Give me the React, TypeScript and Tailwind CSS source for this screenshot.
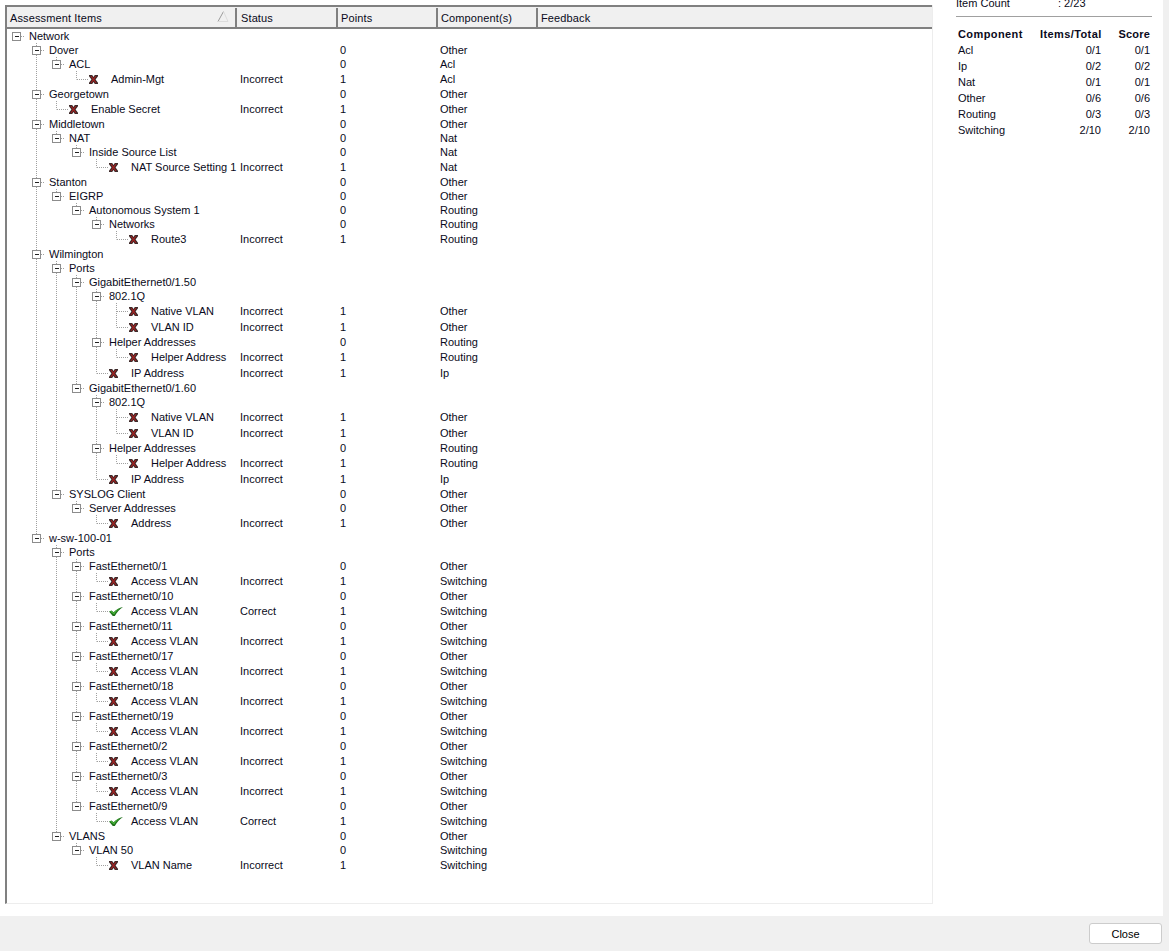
import React from "react";

type Row = [number, string, string?, string?, string?, ("x" | "c")?];

const portBlock = (name: string, good = false): Row[] => [
  [3, name, "", "0", "Other"],
  [4, "Access VLAN", good ? "Correct" : "Incorrect", "1", "Switching", good ? "c" : "x"],
];

const giBlock = (name: string): Row[] => [
  [3, name],
  [4, "802.1Q"],
  [5, "Native VLAN", "Incorrect", "1", "Other", "x"],
  [5, "VLAN ID", "Incorrect", "1", "Other", "x"],
  [4, "Helper Addresses", "", "0", "Routing"],
  [5, "Helper Address", "Incorrect", "1", "Routing", "x"],
  [4, "IP Address", "Incorrect", "1", "Ip", "x"],
];

const rows: Row[] = [
  [0, "Network"],
  [1, "Dover", "", "0", "Other"],
  [2, "ACL", "", "0", "Acl"],
  [3, "Admin-Mgt", "Incorrect", "1", "Acl", "x"],
  [1, "Georgetown", "", "0", "Other"],
  [2, "Enable Secret", "Incorrect", "1", "Other", "x"],
  [1, "Middletown", "", "0", "Other"],
  [2, "NAT", "", "0", "Nat"],
  [3, "Inside Source List", "", "0", "Nat"],
  [4, "NAT Source Setting 1", "Incorrect", "1", "Nat", "x"],
  [1, "Stanton", "", "0", "Other"],
  [2, "EIGRP", "", "0", "Other"],
  [3, "Autonomous System 1", "", "0", "Routing"],
  [4, "Networks", "", "0", "Routing"],
  [5, "Route3", "Incorrect", "1", "Routing", "x"],
  [1, "Wilmington"],
  [2, "Ports"],
  ...giBlock("GigabitEthernet0/1.50"),
  ...giBlock("GigabitEthernet0/1.60"),
  [2, "SYSLOG Client", "", "0", "Other"],
  [3, "Server Addresses", "", "0", "Other"],
  [4, "Address", "Incorrect", "1", "Other", "x"],
  [1, "w-sw-100-01"],
  [2, "Ports"],
  ...portBlock("FastEthernet0/1"),
  ...portBlock("FastEthernet0/10", true),
  ...portBlock("FastEthernet0/11"),
  ...portBlock("FastEthernet0/17"),
  ...portBlock("FastEthernet0/18"),
  ...portBlock("FastEthernet0/19"),
  ...portBlock("FastEthernet0/2"),
  ...portBlock("FastEthernet0/3"),
  ...portBlock("FastEthernet0/9", true),
  [2, "VLANS", "", "0", "Other"],
  [3, "VLAN 50", "", "0", "Switching"],
  [4, "VLAN Name", "Incorrect", "1", "Switching", "x"],
];

function continuing(index: number, level: number) {
  for (let i = index + 1; i < rows.length; i++) {
    if (rows[i][0] < level) return false;
    if (rows[i][0] === level) return true;
  }
  return false;
}

const DOT = "#a0a0a0";

function Guides({ index, height }: { index: number; height: number }) {
  const row = rows[index];
  const level = row[0];
  const leaf = !!row[5];
  const cx = 10 + 20 * level;
  const mid = Math.floor(height / 2) + 0.5;
  const verticals: number[] = [];
  for (let l = 1; l < level; l++) if (continuing(index, l)) verticals.push(10 + 20 * l);
  const next = continuing(index, level);
  return (
    <svg width="234" height={height} className="absolute left-0 top-0">
      {verticals.map((x) => (
        <line key={x} x1={x + 0.5} x2={x + 0.5} y1="0" y2={height} stroke={DOT} strokeDasharray="1 1" />
      ))}
      {level > 0 && (
        <line x1={cx + 0.5} x2={cx + 0.5} y1="0" y2={next ? height : mid} stroke={DOT} strokeDasharray="1 1" />
      )}
      <line x1={leaf ? cx + 1 : cx + 5} x2={leaf ? cx + 12 : cx + 9} y1={mid} y2={mid} stroke={DOT} strokeDasharray="1 1" />
      {!leaf && (
        <g>
          <rect x={cx - 3.5} y={mid - 4} width="8" height="8" fill="#fff" stroke="#8c8c8c" />
          <line x1={cx - 1} x2={cx + 3} y1={mid} y2={mid} stroke="#222" />
        </g>
      )}
    </svg>
  );
}

function XIcon() {
  return (
    <svg width="9" height="9" viewBox="0 0 9 9" className="shrink-0">
      <path d="M0 0h3.2L4.5 2 5.8 0H9v1.2L6.6 4.5 9 7.8V9H5.8L4.5 7 3.2 9H0V7.8L2.4 4.5 0 1.2z" fill="#3d2a2a" />
      <path d="M1.6 1h1L4.5 3.6 6.4 1h1L5.3 4.5 7.4 8h-1L4.5 5.4 2.6 8h-1L3.7 4.5z" fill="#a82020" />
    </svg>
  );
}

function CheckIcon() {
  return (
    <svg width="14" height="9" viewBox="0 0 14 9" className="shrink-0">
      <path d="M0 4.5 2.6 3.4 4.6 5.2C7 2.8 10 .9 14 0 10.8 2 8 5 5.8 9H3.8z" fill="#1f6e1a" />
      <path d="M1 4.5 2.6 3.9 4.6 5.8C7 3.4 9.2 2 11.5 1.1 9 2.8 7.2 4.6 5.2 7.4z" fill="#46b53a" />
    </svg>
  );
}

function TreeRow({ index }: { index: number }) {
  const [level, label, status, pts, comp, icon] = rows[index];
  const height = icon ? 16 : 14;
  return (
    <div className={icon ? "flex h-[16px] items-center" : "flex h-[14px] items-center"}>
      <div className="relative flex h-full w-[234px] shrink-0 items-center" style={{ paddingLeft: 23 + 20 * level }}>
        <Guides index={index} height={height} />
        {icon ? (
          <>
            <span className="relative flex w-[22px] shrink-0 items-center">{icon === "x" ? <XIcon /> : <CheckIcon />}</span>
            <span className="relative whitespace-nowrap">{label}</span>
          </>
        ) : (
          <span className="relative whitespace-nowrap">{label}</span>
        )}
      </div>
      <div className="w-[100px] shrink-0">{status}</div>
      <div className="w-[100px] shrink-0">{pts}</div>
      <div className="w-[100px] shrink-0">{comp}</div>
    </div>
  );
}

const summary = [
  ["Acl", "0/1", "0/1"],
  ["Ip", "0/2", "0/2"],
  ["Nat", "0/1", "0/1"],
  ["Other", "0/6", "0/6"],
  ["Routing", "0/3", "0/3"],
  ["Switching", "2/10", "2/10"],
];

export default function App() {
  return (
    <div className="flex h-[951px] w-[1169px] flex-col overflow-hidden bg-[#f0f0f0] font-['Liberation_Sans',Arial,sans-serif] text-[11px] leading-[14px] text-[#0a0a20]">
      <div className="mr-[6px] flex h-[916px] shrink-0 overflow-hidden bg-white">
        <div className="ml-[5px] mt-[5px] flex h-[899px] w-[928px] shrink-0 flex-col border-b border-l-2 border-r border-b-[#ededed] border-l-[#808080] border-r-[#ededed]">
          <div className="flex h-[24px] shrink-0 border-y-2 border-[#808080] bg-[#f0f0f0] pt-px tracking-[0.12px]">
            <div className="relative flex w-[230px] shrink-0 items-center border-r-2 border-[#808080] pl-[3px]">
              Assessment Items
              <svg width="12" height="11" viewBox="0 0 12 11" className="absolute right-[6px] top-[3px]">
                <path d="M1 10.5 6.5 .5" fill="none" stroke="#9a9a9a" />
                <path d="M6.5 .5 11 10.5H1" fill="none" stroke="#dcdcdc" />
              </svg>
            </div>
            <div className="flex w-[101px] shrink-0 items-center border-r-2 border-[#808080] pl-[4px]">Status</div>
            <div className="flex w-[100px] shrink-0 items-center border-r-2 border-[#808080] pl-[3px]">Points</div>
            <div className="flex w-[100px] shrink-0 items-center border-r-2 border-[#808080] pl-[3px]">Component(s)</div>
            <div className="flex items-center pl-[3px]">Feedback</div>
          </div>
          <div className="-ml-px">
            {rows.map((_, i) => (
              <TreeRow key={i} index={i} />
            ))}
          </div>
        </div>
        <div className="ml-[23px] w-[196px] shrink-0">
          <div className="-mt-[4px] flex h-[14px]">
            <span className="w-[102px]">Item Count</span>
            <span>: 2/23</span>
          </div>
          <div className="mt-[6px] h-px bg-[#a0a0a0]" />
          <div className="mt-[9px] flex h-[16px] items-center px-[2px] font-bold tracking-[0.4px]">
            <span className="flex-1">Component</span>
            <span className="w-[80px] text-right">Items/Total</span>
            <span className="w-[49px] text-right tracking-[0.2px]">Score</span>
          </div>
          {summary.map(([a, b, c]) => (
            <div key={a} className="flex h-[16px] items-center px-[2px]">
              <span className="flex-1">{a}</span>
              <span className="w-[80px] text-right">{b}</span>
              <span className="w-[49px] text-right">{c}</span>
            </div>
          ))}
        </div>
      </div>
      <div className="flex flex-1 items-start justify-end pr-[7px] pt-[7px]">
        <button className="h-[21px] w-[73px] rounded-[3px] border border-[#cccccc] bg-white text-center text-[#000]">Close</button>
      </div>
    </div>
  );
}
